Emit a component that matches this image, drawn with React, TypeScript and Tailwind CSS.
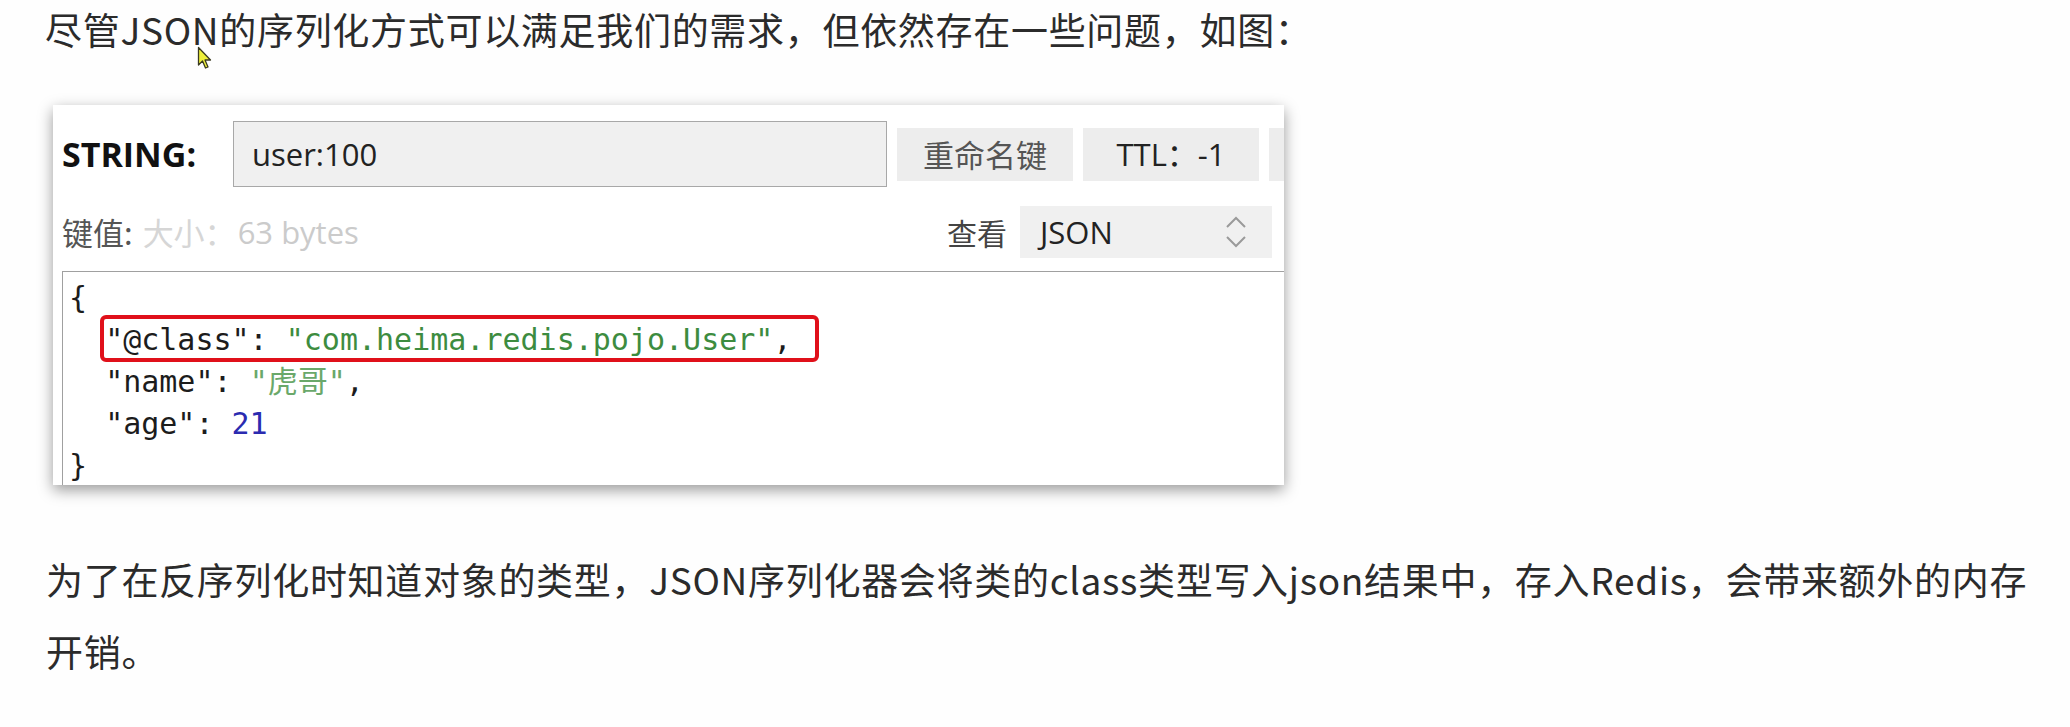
import React from "react";

const ui = { fontFamily: '"Open Sans", "Noto Sans CJK SC", sans-serif' };
const cjk = { fontFamily: '"Noto Sans CJK SC", sans-serif' };
const mono = { fontFamily: '"DejaVu Sans Mono", "Noto Sans CJK SC", monospace' };

function Cursor() {
  return (
    <svg
      className="absolute left-[197px] top-[46px]"
      width="16"
      height="24"
      viewBox="0 0 16 24"
    >
      <path
        d="M1.5 1.5 L1.5 19 L5.5 15 L8.5 22 L11 21 L8 14 L13.5 14 Z"
        fill="#eef03a"
        stroke="#3a3a20"
        strokeWidth="1.3"
        strokeLinejoin="round"
      />
    </svg>
  );
}

function Chevrons() {
  return (
    <svg width="24" height="36" viewBox="0 0 24 36">
      <polyline points="3,13 12,4 21,13" fill="none" stroke="#9a9a9a" strokeWidth="2" />
      <polyline points="3,23 12,32 21,23" fill="none" stroke="#9a9a9a" strokeWidth="2" />
    </svg>
  );
}

export default function App() {
  return (
    <div className="relative w-[2070px] h-[727px] overflow-hidden bg-[#fefefe]" style={cjk}>
      <div className="pl-[45px] h-[59px] leading-[59px] text-[37px] tracking-[0.7px] text-[#2b2b2b] whitespace-nowrap">
        尽管JSON的序列化方式可以满足我们的需求，但依然存在一些问题，如图：
      </div>
      <Cursor />

      <div className="mt-[46px] ml-[53px] w-[1231px] h-[380px] bg-white shadow-[0_5px_14px_rgba(0,0,0,0.4)] overflow-hidden pt-[16px] pl-[9px] flex flex-col">
        <div className="flex items-center h-[66px] shrink-0">
          <div className="w-[171px] shrink-0 text-[34px] font-bold text-[#111]" style={ui}>
            STRING:
          </div>
          <div
            className="w-[654px] h-[66px] shrink-0 border border-[#a8a8a8] bg-[#f0f0f0] pl-[18px] flex items-center text-[31px] text-[#222]"
            style={ui}
          >
            user:100
          </div>
          <div className="ml-[10px] w-[176px] h-[53px] shrink-0 bg-[#ededed] flex items-center justify-center text-[31px] text-[#555]" style={cjk}>
            重命名键
          </div>
          <div className="ml-[10px] w-[176px] h-[53px] shrink-0 bg-[#ededed] flex items-center justify-center text-[31px] text-[#222]" style={ui}>
            TTL：-1
          </div>
          <div className="ml-[10px] w-[176px] h-[53px] shrink-0 bg-[#ededed]" />
        </div>

        <div className="mt-[19px] h-[52px] shrink-0 flex items-center justify-between pr-[12px]">
          <div className="flex items-center text-[31px] whitespace-nowrap">
            <span className="text-[#555]" style={cjk}>键值:</span>
            <span className="ml-[10px] text-[#d6d6d6]" style={cjk}>大小：</span>
            <span className="ml-[2px] text-[#cbcbcb]" style={ui}>63 bytes</span>
          </div>
          <div className="flex items-center">
            <span className="mr-[13px] text-[30px] text-[#444]" style={cjk}>查看</span>
            <div className="w-[252px] h-[52px] bg-[#f0f0f0] pl-[20px] pr-[24px] flex items-center justify-between">
              <span className="text-[31px] text-[#222]" style={ui}>JSON</span>
              <Chevrons />
            </div>
          </div>
        </div>

        <div
          className="mt-[13px] flex-1 border-t border-l border-[#a0a0a0] bg-white pl-[6px] pt-[5px] text-[30px] leading-[42px] whitespace-pre text-[#1c1c1c]"
          style={mono}
        >
          <div>{"{"}</div>
          <div className="relative">
            {"  "}"@class": <span className="text-[#3d8c3f]">"com.heima.redis.pojo.User"</span>,
            <div className="absolute left-[31px] top-[-4px] w-[719px] h-[47px] border-[4px] border-[#e0101a] rounded-[6px]" />
          </div>
          <div>
            {"  "}"name": <span className="text-[#6aa86a]">"虎哥"</span>,
          </div>
          <div>
            {"  "}"age": <span className="text-[#2b2bb0]">21</span>
          </div>
          <div>{"}"}</div>
        </div>
      </div>

      <div className="mt-[58px] pl-[46px] text-[37px] tracking-[0.7px] leading-[72px] text-[#2b2b2b] whitespace-nowrap">
        <div>为了在反序列化时知道对象的类型，JSON序列化器会将类的class类型写入json结果中，存入Redis，会带来额外的内存</div>
        <div>开销。</div>
      </div>
    </div>
  );
}
